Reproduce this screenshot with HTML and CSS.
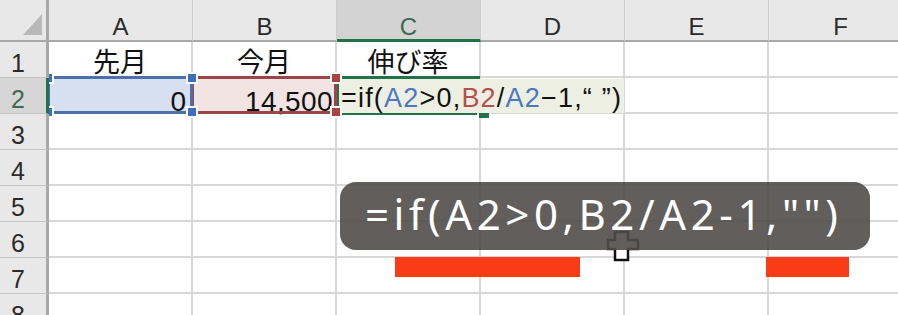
FILE: index.html
```html
<!DOCTYPE html>
<html lang="ja">
<head>
    <meta charset="UTF-8">
    <title>伸び率の数式</title>
    <link rel="stylesheet" href="styles.css">
</head>
<body>
    <div class="sheet">
        <div class="grid">
            <div class="corner"></div>
            <div class="col-head">A</div>
            <div class="col-head">B</div>
            <div class="col-head sel">C</div>
            <div class="col-head">D</div>
            <div class="col-head">E</div>
            <div class="col-head">F</div>

            <div class="row-head">1</div>
            <div class="cell jp">先月</div>
            <div class="cell jp">今月</div>
            <div class="cell jp">伸び率</div>
            <div class="cell"></div>
            <div class="cell"></div>
            <div class="cell"></div>

            <div class="row-head sel">2</div>
            <div class="cell num range-a">0
                <div class="range blue">
                    <span class="h tl"></span><span class="h tr"></span><span class="h bl"></span><span class="h br"></span>
                </div>
            </div>
            <div class="cell num range-b">14,500
                <div class="range red">
                    <span class="h tl"></span><span class="h tr"></span><span class="h bl"></span><span class="h br"></span>
                </div>
            </div>
            <div class="cell active-cell">
                <div class="active"><span class="fill-handle"></span></div>
                <div class="editor">=if(<span class="ref-a">A2</span>&gt;0,<span class="ref-b">B2</span>/<span class="ref-a">A2</span>−1,“ ”)</div>
            </div>
            <div class="cell"></div>
            <div class="cell"></div>
            <div class="cell"></div>

            <div class="row-head">3</div>
            <div class="cell"></div><div class="cell"></div><div class="cell"></div><div class="cell"></div><div class="cell"></div><div class="cell"></div>
            <div class="row-head">4</div>
            <div class="cell"></div><div class="cell"></div><div class="cell"></div><div class="cell"></div><div class="cell"></div><div class="cell"></div>
            <div class="row-head">5</div>
            <div class="cell"></div><div class="cell"></div><div class="cell"></div><div class="cell"></div><div class="cell"></div><div class="cell"></div>
            <div class="row-head">6</div>
            <div class="cell"></div><div class="cell"></div><div class="cell"></div><div class="cell"></div><div class="cell"></div><div class="cell"></div>
            <div class="row-head">7</div>
            <div class="cell"></div><div class="cell"></div><div class="cell"></div><div class="cell"></div><div class="cell"></div><div class="cell"></div>
            <div class="row-head">8</div>
            <div class="cell"></div><div class="cell"></div><div class="cell"></div><div class="cell"></div><div class="cell"></div><div class="cell"></div>
        </div>

        <!-- mouse cursor, sits under the caption -->
        <svg class="cursor" width="34" height="36" viewBox="0 0 34 36">
            <path d="M9 6 H22 V14 H32 V23 H22 V34 H9 V23 H2 V14 H9 Z" fill="#fff" stroke="#111" stroke-width="2.5"/>
        </svg>

        <div class="caption">=if(A2&gt;0,B2/A2-1,"")</div>
        <div class="mark mark-1"></div>
        <div class="mark mark-2"></div>
    </div>
</body>
</html>
```

FILE: styles.css
```css
body {
    margin: 0;
    background: #fff;
}
.sheet {
    position: relative;
    width: 898px;
    height: 315px;
    overflow: hidden;
    font-family: "Liberation Sans", Arial, sans-serif;
    color: #111;
}
.grid {
    display: grid;
    grid-template-columns: 49px repeat(6, 144px);
    grid-template-rows: 42px repeat(8, 36px);
}
.grid > div {
    box-sizing: border-box;
}

/* headers */
.corner {
    position: relative;
    background: #e8e8e8;
    border-right: 3px solid #a8a8a8;
    border-bottom: 2px solid #a8a8a8;
}
.corner::after {
    content: "";
    position: absolute;
    right: 4px;
    bottom: 5px;
    border-left: 19px solid transparent;
    border-bottom: 21px solid #b9b9b9;
}
.col-head {
    background: #e8e8e8;
    border-right: 1px solid #cdcdcd;
    border-bottom: 2px solid #a8a8a8;
    text-align: center;
    font-size: 24px;
    line-height: 1;
    padding-top: 15px;
    color: #2b2b2b;
}
.col-head.sel {
    background: #d3d3d3;
    border-bottom: 3px solid #24704a;
    color: #3d6b52;
}
.row-head {
    position: relative;
    z-index: 4;
    background: #e8e8e8;
    border-right: 3px solid #a8a8a8;
    border-bottom: 1px solid #c4c4c4;
    font-size: 25px;
    line-height: 1;
    padding: 9px 0 0 11px;
    color: #2b2b2b;
}
.row-head.sel {
    background: #d6d6d6;
    border-right-color: #24704a;
    color: #3d6b52;
}

/* cells */
.cell {
    position: relative;
    border-right: 2px solid #d8d8d8;
    border-bottom: 2px solid #d8d8d8;
}
.jp {
    font-family: "Noto Sans CJK JP", sans-serif;
    font-size: 27px;
    line-height: 1;
    text-align: center;
    padding-top: 5px;
}
.num {
    font-size: 28px;
    line-height: 1;
    text-align: right;
    padding: 10px 5px 0 0;
}
.range-b.num {
    padding-right: 2px;
    letter-spacing: 0.4px;
}
.range-a {
    z-index: 3;
    background: #d6e0f1;
}
.range-b {
    z-index: 2;
    background: #f2e4e3;
}
.active-cell {
    z-index: 1;
}

/* reference highlight boxes */
.range {
    position: absolute;
    top: -2px;
    left: -2px;
    right: -2px;
    bottom: -2px;
    border: 3px solid;
}
.range.blue {
    border-color: #4b70aa;
}
.range.red {
    border-color: #984646;
}
.h {
    position: absolute;
    width: 8px;
    height: 8px;
    border: 2px solid #fff;
}
.blue .h {
    background: #3d6fc0;
}
.red .h {
    background: #ad4240;
}
.h.tl { top: -7px; left: -8px; }
.h.tr { top: -7px; right: -8px; }
.h.bl { bottom: -7px; left: -8px; }
.h.br { bottom: -7px; right: -8px; }

.active {
    position: absolute;
    top: -2px;
    left: -1px;
    right: -1px;
    bottom: -3px;
    border: 3px solid #24704a;
}
.fill-handle {
    position: absolute;
    right: -12px;
    bottom: -6px;
    width: 10px;
    height: 7px;
    background: #24704a;
    border-left: 2px solid #fff;
}
.editor {
    position: absolute;
    top: 1px;
    left: 2px;
    width: 285px;
    height: 34px;
    box-sizing: border-box;
    background: #edefe2;
    font-size: 27px;
    line-height: 1;
    letter-spacing: 1.2px;
    padding: 6px 0 0 2px;
    white-space: nowrap;
    color: #111;
}
.ref-a {
    color: #4a78c2;
}
.ref-b {
    color: #b5514c;
}

/* caption and marks over the sheet */
.cursor {
    position: absolute;
    left: 606px;
    top: 226px;
    z-index: 8;
}
.caption {
    position: absolute;
    z-index: 10;
    left: 340px;
    top: 182px;
    width: 530px;
    height: 68px;
    box-sizing: border-box;
    border-radius: 16px;
    background: rgba(80, 77, 74, 0.9);
    color: #fff;
    font-family: "Noto Sans", sans-serif;
    font-size: 42px;
    line-height: 64px;
    letter-spacing: 4.6px;
    padding-left: 25px;
    white-space: nowrap;
}
.mark {
    position: absolute;
    z-index: 10;
    top: 257px;
    height: 20px;
    background: #f93c16;
}
.mark-1 {
    left: 395px;
    width: 185px;
}
.mark-2 {
    left: 766px;
    width: 83px;
}
```
